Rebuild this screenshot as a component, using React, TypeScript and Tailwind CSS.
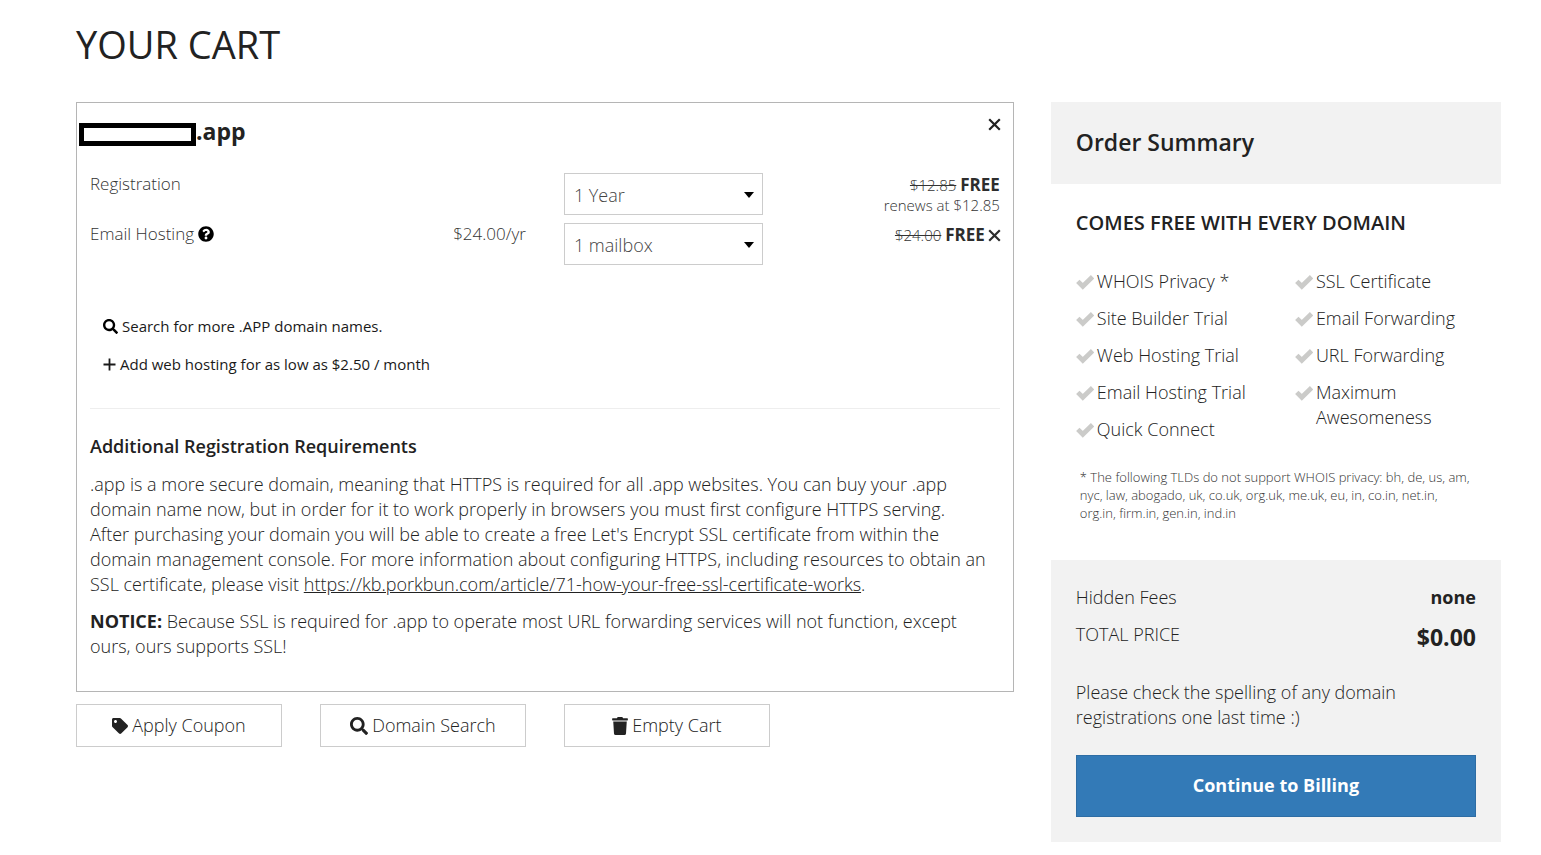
import React, { useState } from 'react';
import { FaTag, FaSearch, FaTrash, FaQuestionCircle } from 'react-icons/fa';

const terms = ['1 Year', '2 Years', '3 Years', '5 Years', '10 Years'];
const mailboxes = ['1 mailbox', '2 mailboxes', '3 mailboxes'];

const perks = [
  ['WHOIS Privacy *', 'Site Builder Trial', 'Web Hosting Trial', 'Email Hosting Trial', 'Quick Connect'],
  ['SSL Certificate', 'Email Forwarding', 'URL Forwarding', 'Maximum Awesomeness'],
];

function CloseIcon() {
  return (
    <svg viewBox="0 0 13 13" className="w-[13px] h-[13px]" fill="none" stroke="currentColor" strokeWidth="2.2" aria-hidden="true">
      <path d="M1.2 1.2 11.8 11.8M11.8 1.2 1.2 11.8" />
    </svg>
  );
}

function PlusIcon() {
  return (
    <svg viewBox="0 0 13 13" className="w-[13px] h-[13px]" fill="none" stroke="currentColor" strokeWidth="1.8" aria-hidden="true">
      <path d="M6.5 0.5v12M0.5 6.5h12" />
    </svg>
  );
}

function CheckIcon() {
  return (
    <svg viewBox="0 0 18 15" className="w-[18px] h-[15px] mt-[6px] shrink-0" fill="none" stroke="#cbcbc9" strokeWidth="4.8" aria-hidden="true">
      <path d="M1.8 6.4 6.8 11.3 16.6 1.8" />
    </svg>
  );
}

interface DropdownProps {
  label: string;
  options: string[];
}

function Dropdown({ label, options }: DropdownProps) {
  const [value, setValue] = useState(options[0]);

  return (
    <div className="relative h-[42px]">
      <select
        aria-label={label}
        value={value}
        onChange={(e) => setValue(e.target.value)}
        className="w-full h-full appearance-none border border-[#ccc] bg-white pl-[9px] pr-6 pt-[2px] text-lg leading-6 text-[#444] cursor-pointer"
      >
        {options.map((option) => (
          <option key={option}>{option}</option>
        ))}
      </select>
      <svg viewBox="0 0 10 6" className="absolute right-[9px] top-[19px] w-[10px] h-[6px] pointer-events-none" aria-hidden="true">
        <path d="M0 0h10L5 6z" fill="#000" />
      </svg>
    </div>
  );
}

function CartItem() {
  return (
    <section className="border border-[#b5b5b5]">
      <div className="flex items-start justify-between pl-[2px] pr-3 pt-3">
        <h2 className="flex items-center text-[23px] leading-8 font-bold">
          <span className="w-[117px] h-[23px] mt-[6px] border-[5px] border-black bg-white" />
          .app
        </h2>
        <button type="button" aria-label="Remove domain" className="mt-[3px] cursor-pointer">
          <CloseIcon />
        </button>
      </div>

      <div className="px-[13px] pt-[26px] pb-8">
        <div className="grid grid-cols-4 gap-x-[38px] gap-y-2 text-[17px] leading-[22px] text-[#333]">
          <div className="col-span-2">Registration</div>
          <Dropdown label="Registration term" options={terms} />
          <div className="h-[42px] pt-[2px] text-right text-[15px] leading-5">
            <div className="h-5">
              <s>$12.85</s> <strong className="text-[17px] leading-5 font-bold text-[#2d2d2d]">FREE</strong>
            </div>
            <div>renews at $12.85</div>
          </div>

          <div className="flex items-center gap-1 self-start">
            Email Hosting <FaQuestionCircle className="w-4 h-4 text-black" />
          </div>
          <div className="text-right">$24.00/yr</div>
          <Dropdown label="Mailboxes" options={mailboxes} />
          <div className="flex items-start justify-end gap-[3px] pt-[2px] -mr-px text-[15px] leading-5">
            <div>
              <s>$24.00</s> <strong className="text-[17px] leading-5 font-bold text-[#2d2d2d]">FREE</strong>
            </div>
            <button type="button" aria-label="Remove email hosting" className="mt-1 text-[#2d2d2d] cursor-pointer">
              <CloseIcon />
            </button>
          </div>
        </div>

        <div className="flex flex-col items-start pl-[13px] pt-[42px] text-[15px] leading-[38px] font-normal text-[#1a1a1a]">
          <a href="#search" className="flex items-center gap-1">
            <FaSearch className="w-[15px] h-[15px] text-black" />
            Search for more .APP domain names.
          </a>
          <a href="#hosting" className="flex items-center gap-1">
            <PlusIcon />
            Add web hosting for as low as $2.50 / month
          </a>
        </div>

        <hr className="my-[25px] border-[#eee]" />

        <h3 className="mb-[13px] text-lg leading-[25px] font-semibold">Additional Registration Requirements</h3>
        <p className="mb-3">
          .app is a more secure domain, meaning that HTTPS is required for all .app websites. You can buy your .app
          domain name now, but in order for it to work properly in browsers you must first configure HTTPS serving.
          <br />
          After purchasing your domain you will be able to create a free Let's Encrypt SSL certificate from within the
          domain management console. For more information about configuring HTTPS, including resources to obtain an SSL
          certificate, please visit{' '}
          <a href="#kb" className="underline">
            https://kb.porkbun.com/article/71-how-your-free-ssl-certificate-works
          </a>
          .
        </p>
        <p>
          <strong className="font-bold">NOTICE:</strong> Because SSL is required for .app to operate most URL forwarding
          services will not function, except ours, ours supports SSL!
        </p>
      </div>
    </section>
  );
}

function CartActions() {
  const buttonClass =
    'flex h-[43px] items-center justify-center gap-1 border border-[#ccc] bg-white cursor-pointer';

  return (
    <div className="mt-3 grid grid-cols-4 gap-[38px]">
      <button type="button" className={buttonClass}>
        <FaTag className="w-4 h-4" />
        Apply Coupon
      </button>
      <button type="button" className={buttonClass}>
        <FaSearch className="w-[18px] h-[18px]" />
        Domain Search
      </button>
      <button type="button" className={buttonClass}>
        <FaTrash className="w-4 h-[18px]" />
        Empty Cart
      </button>
    </div>
  );
}

function OrderSummary() {
  return (
    <aside>
      <h2 className="bg-[#f2f2f2] px-[25px] pt-[23px] pb-[25px] text-[23px] leading-[34px] font-semibold">
        Order Summary
      </h2>

      <div className="px-[25px] pt-[25px] pb-[38px]">
        <h3 className="text-xl leading-7 font-semibold">COMES FREE WITH EVERY DOMAIN</h3>

        <div className="mt-8 grid grid-cols-2 gap-[38px]">
          {perks.map((column, i) => (
            <ul key={i} className="flex flex-col gap-3">
              {column.map((perk) => (
                <li key={perk} className="flex items-start gap-[3px]">
                  <CheckIcon />
                  {perk}
                </li>
              ))}
            </ul>
          ))}
        </div>

        <p className="mt-[26px] pl-1 text-[13px] leading-[18px] text-[#333]">
          * The following TLDs do not support WHOIS privacy: bh, de, us, am, nyc, law, abogado, uk, co.uk, org.uk,
          me.uk, eu, in, co.in, net.in, org.in, firm.in, gen.in, ind.in
        </p>
      </div>

      <div className="bg-[#f2f2f2] p-[25px]">
        <div className="flex justify-between">
          <span>Hidden Fees</span>
          <strong className="font-bold">none</strong>
        </div>
        <div className="mt-3 flex justify-between">
          <span>TOTAL PRICE</span>
          <strong className="text-[23px] leading-[30px] font-bold">$0.00</strong>
        </div>
        <p className="mt-7 mb-[25px]">Please check the spelling of any domain registrations one last time :)</p>
        <button
          type="button"
          className="w-full h-[62px] pb-[2px] border border-[#2e6da4] bg-[#337ab7] font-bold text-white cursor-pointer"
        >
          Continue to Billing
        </button>
      </div>
    </aside>
  );
}

export default function App() {
  return (
    <main className="bg-white pl-[76px] pr-10 pt-[23px] pb-3 font-['Open_Sans',sans-serif] text-lg leading-[25px] font-light text-[#222]">
      <h1 className="mb-[37px] text-[38px] leading-[42px] font-normal">YOUR CART</h1>
      <div className="grid grid-cols-[25fr_12fr] items-start gap-[37px]">
        <div>
          <CartItem />
          <CartActions />
        </div>
        <OrderSummary />
      </div>
    </main>
  );
}
